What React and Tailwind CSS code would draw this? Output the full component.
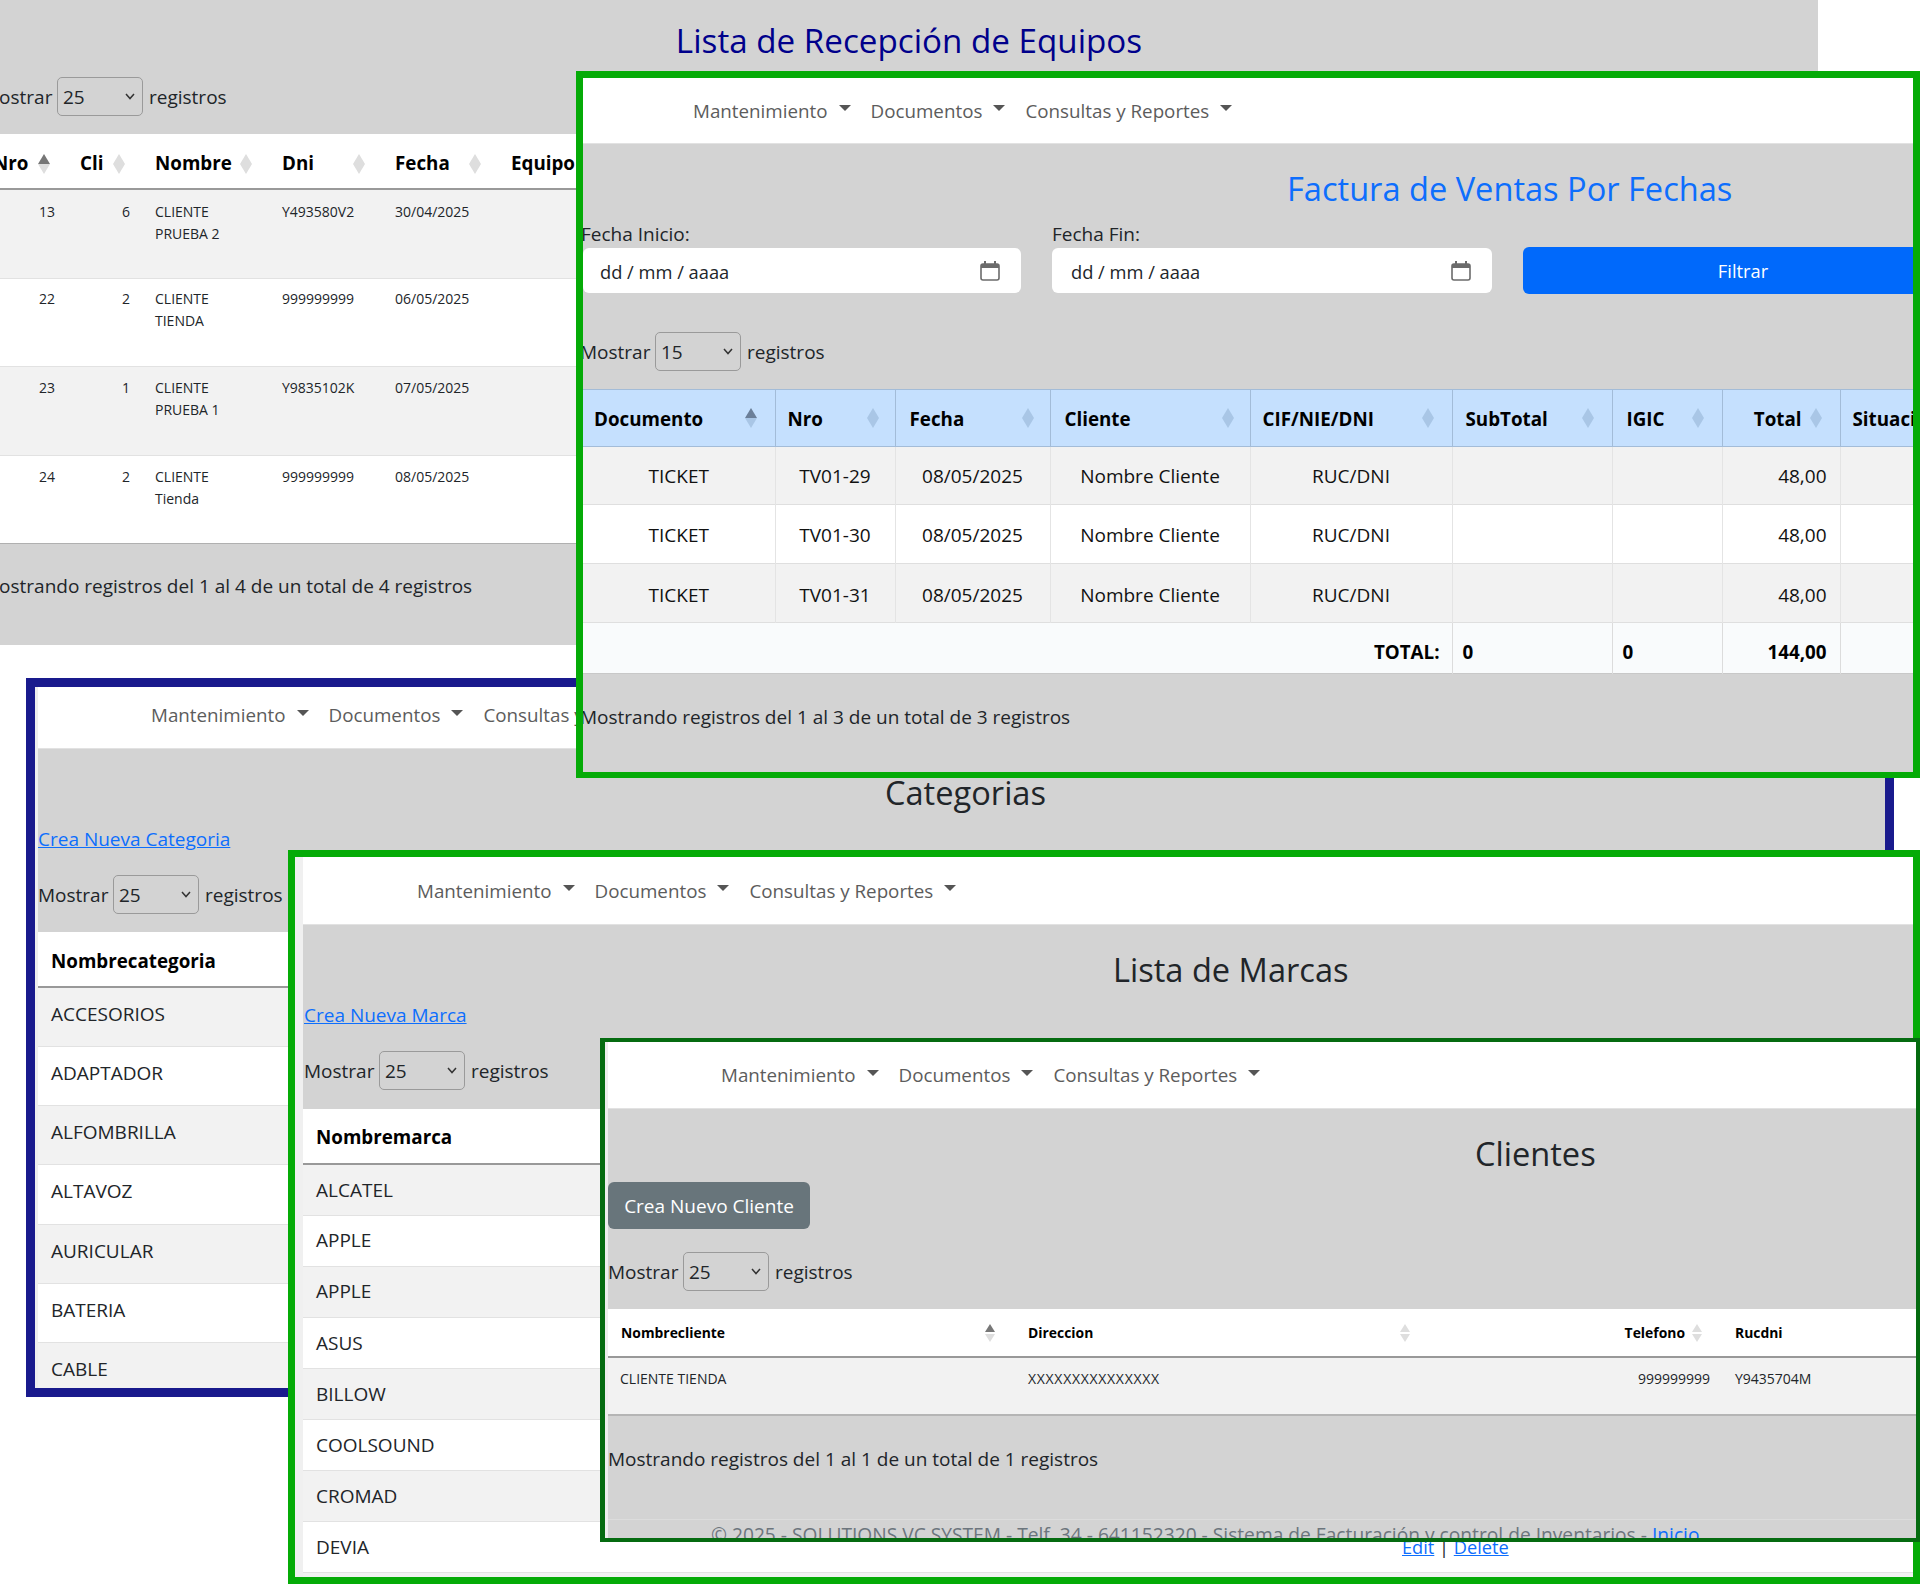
const textBase = 'text-[19px] leading-[24px]';
const navItems = ['Mantenimiento', 'Documentos', 'Consultas y Reportes'];

const Caret = () => (
    <span className="inline-block ml-[11px] mb-[5px] border-x-[6px] border-t-[6px] border-x-transparent border-t-[#555555]" />
);

const NavBar = ({ pad, height }) => (
    <nav className={`flex items-center bg-white border-b border-[#e2e2e2] text-[#5c5c5c] text-[18.8px] leading-[24px] ${pad} ${height}`}>
        {navItems.map((item) => (
            <a key={item} className="flex items-center mr-[20px] whitespace-nowrap">
                {item}
                <Caret />
            </a>
        ))}
    </nav>
);

// Two-triangle sort marker used by the data tables
const SortIcon = ({ active, blue, small }) => {
    const off = blue ? '#a9c6e6' : '#dedede';
    const on = blue ? '#6b7f99' : '#777777';
    return (
        <svg width={small ? 10 : 12} height="20" viewBox="0 0 12 20" preserveAspectRatio="none" className="shrink-0">
            <path d={small ? 'M6 1 L12 9 L0 9 Z' : 'M6 0 L12 10 L0 10 Z'} fill={active ? on : off} />
            <path d={small ? 'M6 19 L12 11 L0 11 Z' : 'M6 20 L12 10 L0 10 Z'} fill={off} />
        </svg>
    );
};

const CalendarIcon = () => (
    <svg width="20" height="20" viewBox="0 0 20 20" className="shrink-0">
        <rect x="1" y="3" width="18" height="16" rx="2" fill="none" stroke="#6b6b6b" strokeWidth="1.6" />
        <rect x="1" y="3" width="18" height="4" fill="#6b6b6b" />
        <rect x="4" y="0" width="2" height="4" fill="#6b6b6b" />
        <rect x="14" y="0" width="2" height="4" fill="#6b6b6b" />
    </svg>
);

const ShowRows = ({ value = '25', className = '' }) => (
    <div className={`flex items-center text-[#212529] whitespace-nowrap ${textBase} ${className}`}>
        <span className="w-[69px]">Mostrar</span>
        <div className="relative ml-[6px]">
            <select defaultValue={value} className="block appearance-none w-[86px] h-[39px] pl-[5px] bg-transparent border border-[#9a9a9a] rounded-[5px]">
                <option value={value}>{value}</option>
            </select>
            <svg width="10" height="7" viewBox="0 0 10 7" className="absolute right-[8px] top-[16px]">
                <path d="M1 1 L5 5.5 L9 1" fill="none" stroke="#333333" strokeWidth="1.5" />
            </svg>
        </div>
        <span className="ml-[6px]">registros</span>
    </div>
);

const DateField = ({ label, className = '', labelClass = '', pad = 'pl-[17px]' }) => (
    <div className={`shrink-0 ${className}`}>
        <div className={`h-[24px] text-[#212529] ${textBase} ${labelClass}`}>{label}</div>
        <div className={`mt-[2px] h-[45px] flex items-center justify-between pr-[21px] bg-white rounded-[6px] text-[#212529] text-[18.3px] ${pad}`}>
            <span className="pt-[2px]">dd / mm / aaaa</span>
            <CalendarIcon />
        </div>
    </div>
);

const Reception = () => {
    const rows = [
        { nro: 13, cli: 6, nombre: ['CLIENTE', 'PRUEBA 2'], dni: 'Y493580V2', fecha: '30/04/2025', h: 'h-[89px]', bg: 'bg-[#f2f2f2]', pt: 'pt-[11px]', line: 'border-[#e2e2e2]' },
        { nro: 22, cli: 2, nombre: ['CLIENTE', 'TIENDA'], dni: '999999999', fecha: '06/05/2025', h: 'h-[88px]', bg: 'bg-white', pt: 'pt-[9px]', line: 'border-[#e2e2e2]' },
        { nro: 23, cli: 1, nombre: ['CLIENTE', 'PRUEBA 1'], dni: 'Y9835102K', fecha: '07/05/2025', h: 'h-[89px]', bg: 'bg-[#f2f2f2]', pt: 'pt-[10px]', line: 'border-[#e2e2e2]' },
        { nro: 24, cli: 2, nombre: ['CLIENTE', 'Tienda'], dni: '999999999', fecha: '08/05/2025', h: 'h-[88px]', bg: 'bg-white', pt: 'pt-[10px]', line: 'border-[#b0b0b0]' },
    ];
    return (
        <section className="absolute left-0 top-0 w-[1818px] h-[645px] bg-[#d3d3d3] overflow-hidden">
            <h2 className="mt-[17px] mb-[12px] h-[48px] flex items-center justify-center text-[#00008b] text-[33.2px]">Lista de Recepción de Equipos</h2>
            <ShowRows className="-ml-[18px]" />
            <table className="-ml-[17px] mt-[18px] w-[760px] table-fixed bg-white text-[14px] text-[#212529]">
                <colgroup>
                    <col className="w-[87px]" />
                    <col className="w-[75px]" />
                    <col className="w-[127px]" />
                    <col className="w-[113px]" />
                    <col className="w-[116px]" />
                    <col className="w-[242px]" />
                </colgroup>
                <thead>
                    <tr className="h-[55px] border-b-2 border-[#999999] text-[18.8px] text-black">
                        {['Nro', 'Cli', 'Nombre', 'Dni', 'Fecha'].map((h, i) => (
                            <th key={h} className="pl-[10px] pr-[20px] pt-[5px] font-bold text-left">
                                <div className="flex items-center justify-between">
                                    {h}
                                    <SortIcon active={i === 0} />
                                </div>
                            </th>
                        ))}
                        <th className="pl-[10px] pt-[5px] font-bold text-left">Equipo</th>
                    </tr>
                </thead>
                <tbody>
                    {rows.map((r) => (
                        <tr key={r.nro} className={`border-b leading-[22px] ${r.line} ${r.h} ${r.bg}`}>
                            <td className={`align-top pr-[15px] text-right ${r.pt}`}>{r.nro}</td>
                            <td className={`align-top pr-[15px] text-right ${r.pt}`}>{r.cli}</td>
                            <td className={`align-top pl-[10px] ${r.pt}`}>{r.nombre[0]}<br />{r.nombre[1]}</td>
                            <td className={`align-top pl-[10px] ${r.pt}`}>{r.dni}</td>
                            <td className={`align-top pl-[10px] ${r.pt}`}>{r.fecha}</td>
                            <td />
                        </tr>
                    ))}
                </tbody>
            </table>
            <div className={`-ml-[18px] mt-[30px] text-[#212529] ${textBase}`}>Mostrando registros del 1 al 4 de un total de 4 registros</div>
        </section>
    );
};

const Sales = () => {
    const cols = [
        { label: 'Documento', w: 'w-[192px]', head: 'pl-[11px] pr-[18px]', active: true },
        { label: 'Nro', w: 'w-[120px]', head: 'pl-[12px] pr-[16px]' },
        { label: 'Fecha', w: 'w-[155px]', head: 'pl-[14px] pr-[16px]' },
        { label: 'Cliente', w: 'w-[200px]', head: 'pl-[14px] pr-[16px]' },
        { label: 'CIF/NIE/DNI', w: 'w-[202px]', head: 'pl-[12px] pr-[18px]' },
        { label: 'SubTotal', w: 'w-[160px]', head: 'pl-[13px] pr-[18px]' },
        { label: 'IGIC', w: 'w-[110px]', head: 'pl-[14px] pr-[18px]' },
    ];
    const rows = [
        { nro: 'TV01-29', bg: 'bg-[#f2f2f2]', h: 'h-[58px]', pt: 'pt-[2px]' },
        { nro: 'TV01-30', bg: 'bg-white', h: 'h-[59px]', pt: 'pt-[3px]' },
        { nro: 'TV01-31', bg: 'bg-[#f2f2f2]', h: 'h-[59px]', pt: 'pt-[5px]' },
    ];
    const cell = 'text-center border-r border-[#e4e4e4]';
    return (
        <section className="absolute left-[576px] top-[71px] w-[1344px] h-[707px] border-x-[7px] border-t-[7px] border-b-[6px] border-[#05ab07] bg-[#d3d3d3] overflow-hidden">
            <NavBar pad="pl-[110px]" height="h-[66px]" />
            <h2 className="mt-[21px] h-[48px] flex items-center pl-[704px] text-[#0d6efd] text-[32.6px] whitespace-nowrap">Factura de Ventas Por Fechas</h2>
            <div className="mt-[9px] flex items-end">
                <DateField label="Fecha Inicio:" className="w-[438px]" labelClass="-ml-[2px]" />
                <DateField label="Fecha Fin:" className="ml-[31px] w-[440px]" pad="pl-[19px]" />
                <button className="shrink-0 ml-[31px] mb-[-1px] w-[440px] h-[47px] bg-[#0069fb] rounded-[6px] text-white text-[18.3px]">Filtrar</button>
            </div>
            <ShowRows value="15" className="-ml-[3px] mt-[39px]" />
            <table className="mt-[18px] w-[1357px] table-fixed text-[19px] text-[#111111]">
                <colgroup>
                    {cols.map((c) => <col key={c.label} className={c.w} />)}
                    <col className="w-[118px]" />
                    <col className="w-[100px]" />
                </colgroup>
                <thead>
                    <tr className="h-[57px] bg-[#c5e0fe] border-y border-[#a3bcd8] text-[18.8px] text-black">
                        {cols.map((c) => (
                            <th key={c.label} className={`font-bold text-left border-r border-[#a3bcd8] ${c.head}`}>
                                <div className="flex items-center justify-between">
                                    <span className="pt-[2px]">{c.label}</span>
                                    <SortIcon blue active={c.active} />
                                </div>
                            </th>
                        ))}
                        <th className="pr-[18px] font-bold border-r border-[#a3bcd8]">
                            <div className="flex items-center justify-end gap-[8px]">
                                <span className="pt-[2px]">Total</span>
                                <SortIcon blue />
                            </div>
                        </th>
                        <th className="pl-[12px] pt-[2px] font-bold text-left whitespace-nowrap">Situación</th>
                    </tr>
                </thead>
                <tbody>
                    {rows.map((r) => (
                        <tr key={r.nro} className={`border-b border-[#dfdfdf] ${r.bg} ${r.h}`}>
                            <td className={`${cell} ${r.pt}`}>TICKET</td>
                            <td className={`${cell} ${r.pt}`}>{r.nro}</td>
                            <td className={`${cell} ${r.pt}`}>08/05/2025</td>
                            <td className={`${cell} ${r.pt}`}>Nombre Cliente</td>
                            <td className={`${cell} ${r.pt}`}>RUC/DNI</td>
                            <td className={cell} />
                            <td className={cell} />
                            <td className={`pr-[13px] text-right border-r border-[#e4e4e4] ${r.pt}`}>48,00</td>
                            <td />
                        </tr>
                    ))}
                </tbody>
                <tfoot>
                    <tr className="h-[51px] bg-[#f9fbfc] border-y border-[#a9a9a9] border-b-[#c8c8c8] font-bold text-[18.8px] text-black">
                        <td colSpan={5} className="pt-[8px] pr-[12px] text-right border-r border-[#dcdcdc]">TOTAL:</td>
                        <td className="pt-[8px] pl-[10px] border-r border-[#dcdcdc]">0</td>
                        <td className="pt-[8px] pl-[10px] border-r border-[#dcdcdc]">0</td>
                        <td className="pt-[8px] pr-[13px] text-right border-r border-[#dcdcdc]">144,00</td>
                        <td />
                    </tr>
                </tfoot>
            </table>
            <div className={`-ml-[3px] mt-[31px] text-[#212529] whitespace-nowrap ${textBase}`}>Mostrando registros del 1 al 3 de un total de 3 registros</div>
        </section>
    );
};

const Categories = () => {
    const rows = ['ACCESORIOS', 'ADAPTADOR', 'ALFOMBRILLA', 'ALTAVOZ', 'AURICULAR', 'BATERIA', 'CABLE', 'CARGADOR'];
    return (
        <section className="absolute left-[26px] top-[678px] w-[1868px] h-[719px] border-[9px] border-[#191a8d] bg-[#d3d3d3] overflow-hidden">
            <div className="border-l-[3px] border-[#eeeeee] h-full">
                <NavBar pad="pl-[113px] pb-[5px]" height="h-[62px]" />
                <h2 className="mt-[20px] h-[48px] flex items-center justify-center pl-[8px] text-[#212529] text-[32.6px]">Categorias</h2>
                <a className={`block mt-[10px] text-[#0d6efd] underline ${textBase}`}>Crea Nueva Categoria</a>
                <ShowRows className="mt-[24px]" />
                <table className="mt-[18px] w-full table-fixed bg-white text-[19px] text-[#212529]">
                    <thead>
                        <tr className="h-[55px] border-b-2 border-[#999999]">
                            <th className="pl-[13px] pt-[5px] text-left font-bold text-[18.8px] text-black">Nombrecategoria</th>
                        </tr>
                    </thead>
                    <tbody>
                        {rows.map((name, i) => (
                            <tr key={name} className={`h-[59.3px] border-b border-[#e2e2e2] ${i % 2 === 0 ? 'bg-[#f2f2f2]' : 'bg-white'}`}>
                                <td className="align-top pt-[12px] pl-[13px]">{name}</td>
                            </tr>
                        ))}
                    </tbody>
                </table>
            </div>
        </section>
    );
};

const Brands = () => {
    const rows = ['ALCATEL', 'APPLE', 'APPLE', 'ASUS', 'BILLOW', 'COOLSOUND', 'CROMAD', 'DEVIA', 'DIGI'];
    return (
        <section className="absolute left-[288px] top-[850px] w-[1632px] h-[734px] border-[7px] border-[#05ab07] bg-[#d3d3d3] overflow-hidden">
            <div className="border-l-[8px] border-[#f0f0f0] h-full">
                <NavBar pad="pl-[114px]" height="h-[68px]" />
                <h2 className="mt-[21px] h-[48px] flex items-center pl-[810px] text-[#212529] text-[32.6px] whitespace-nowrap">Lista de Marcas</h2>
                <a className={`block mt-[9px] ml-[1px] text-[#0d6efd] underline ${textBase}`}>Crea Nueva Marca</a>
                <ShowRows className="mt-[24px] ml-[1px]" />
                <table className="mt-[19px] w-full table-fixed bg-white text-[19px] text-[#212529]">
                    <colgroup>
                        <col className="w-[1087px]" />
                        <col />
                    </colgroup>
                    <thead>
                        <tr className="h-[55px] border-b-2 border-[#999999]">
                            <th className="pl-[13px] pt-[2px] text-left font-bold text-[18.8px] text-black">Nombremarca</th>
                            <th />
                        </tr>
                    </thead>
                    <tbody>
                        {rows.map((name, i) => (
                            <tr key={i} className={`h-[51.1px] border-b border-[#e2e2e2] ${i % 2 === 0 ? 'bg-[#f2f2f2]' : 'bg-white'}`}>
                                <td className="pl-[13px]">{name}</td>
                                <td className="pl-[12px] text-[18.2px]">
                                    <a className="text-[#0d6efd] underline">Edit</a> | <a className="text-[#0d6efd] underline">Delete</a>
                                </td>
                            </tr>
                        ))}
                    </tbody>
                </table>
            </div>
        </section>
    );
};

const Clients = () => (
    <section className="absolute left-[600px] top-[1038px] w-[1320px] h-[504px] border-y-4 border-r-4 border-l-[5px] border-[#056b10] bg-[#d3d3d3] overflow-hidden">
        <div className="border-l-[3px] border-[#eeeeee] h-full">
            <NavBar pad="pl-[113px]" height="h-[67px]" />
            <h2 className="mt-[21px] h-[48px] flex items-center pl-[867px] text-[#212529] text-[32.6px] whitespace-nowrap">Clientes</h2>
            <button className="block mt-[4px] w-[202px] h-[47px] pt-[1px] bg-[#68757b] rounded-[6px] text-white text-[19px]">Crea Nuevo Cliente</button>
            <ShowRows className="mt-[23px]" />
            <table className="mt-[18px] w-full table-fixed bg-white text-[14px] text-[#212529]">
                <colgroup>
                    <col className="w-[410px]" />
                    <col className="w-[407px]" />
                    <col className="w-[300px]" />
                    <col />
                </colgroup>
                <thead>
                    <tr className="h-[48px] border-b-2 border-[#999999] text-[13.9px] text-black">
                        <th className="pl-[13px] pr-[23px] pt-[1px] font-bold text-left">
                            <div className="flex items-center justify-between">Nombrecliente<SortIcon small active /></div>
                        </th>
                        <th className="pl-[10px] pr-[15px] pt-[1px] font-bold text-left">
                            <div className="flex items-center justify-between">Direccion<SortIcon small /></div>
                        </th>
                        <th className="pr-[23px] pt-[1px] font-bold">
                            <div className="flex items-center justify-end gap-[7px]">Telefono<SortIcon small /></div>
                        </th>
                        <th className="pl-[10px] pt-[1px] font-bold text-left">Rucdni</th>
                    </tr>
                </thead>
                <tbody>
                    <tr className="h-[58px] bg-[#f2f2f2] border-b-2 border-[#b5b5b5]">
                        <td className="align-top pt-[10px] pl-[12px]">CLIENTE TIENDA</td>
                        <td className="align-top pt-[10px] pl-[10px] tracking-[0.7px]">XXXXXXXXXXXXXXX</td>
                        <td className="align-top pt-[10px] pr-[15px] text-right">999999999</td>
                        <td className="align-top pt-[10px] pl-[10px]">Y9435704M</td>
                    </tr>
                </tbody>
            </table>
            <div className={`mt-[31px] text-[#212529] whitespace-nowrap ${textBase}`}>Mostrando registros del 1 al 1 de un total de 1 registros</div>
            <footer className="mt-[48px] pt-[3px] pl-[103px] border-t border-[#dcdcdc] text-[#6c757d] whitespace-nowrap text-[19.2px] leading-[24px]">
                © 2025 - SOLUTIONS VC SYSTEM - Telf. 34 - 641152320 - Sistema de Facturación y control de Inventarios - <a className="text-[#0d6efd]">Inicio</a>
            </footer>
        </div>
    </section>
);

export default function App() {
    return (
        <div className="relative w-[1920px] h-[1584px] bg-white overflow-hidden font-['Open_Sans',sans-serif]">
            <Reception />
            <Categories />
            <Sales />
            <Brands />
            <Clients />
        </div>
    );
}
